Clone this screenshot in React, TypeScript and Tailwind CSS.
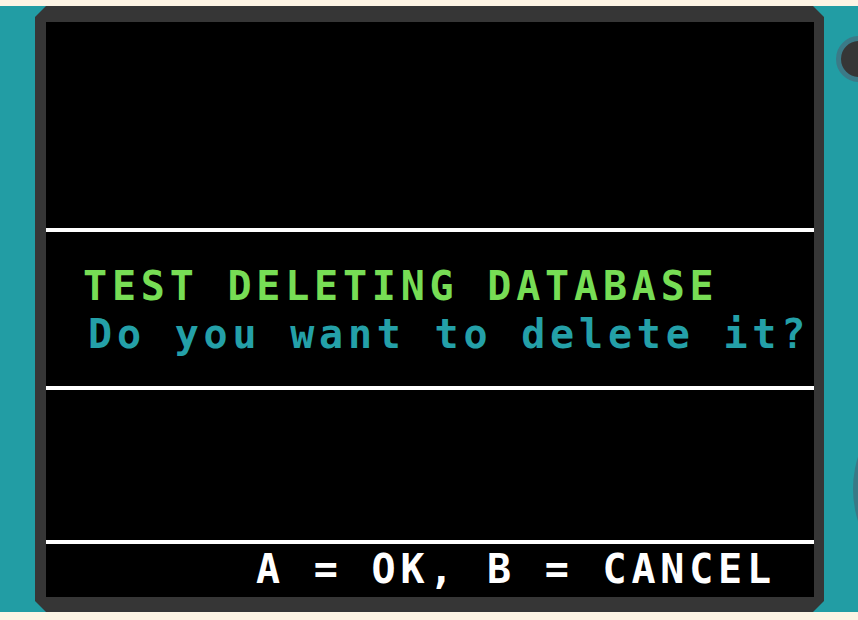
const mono = "font-['DejaVu_Sans_Mono','Liberation_Mono',monospace] font-bold text-[40px] leading-[48px] tracking-[4.8px] whitespace-pre"

export default function App() {
  return (
    <div className="w-[858px] h-[620px] bg-[#fdf4e4] pt-[6px] overflow-hidden">
      <div className="relative h-[606px] bg-[#229da4] pl-[35px] overflow-hidden">
        {/* right side buttons */}
        <div className="absolute left-[836px] top-[30px] w-[46px] h-[46px] rounded-full bg-[#363636] border-[5px] border-[#3b7a87]" />
        <div className="absolute left-[853px] top-[377px] w-[212px] h-[212px] rounded-full bg-[#377a86]" />

        <div className="relative w-[789px] h-full bg-[#363636] pl-[11px] pr-[10px] pt-[16px] pb-[15px] [clip-path:polygon(11px_0,calc(100%-11px)_0,100%_11px,100%_calc(100%-11px),calc(100%-11px)_100%,11px_100%,0_calc(100%-11px),0_11px)]">
          <div className="flex flex-col h-full bg-black">
            <div className="h-[206px]" />
            <div className="h-[4px] bg-white" />
            <div className="h-[154px] pt-[30px] pl-[37px]">
              <div className={`${mono} text-[#77dd55]`}>TEST DELETING DATABASE</div>
              <div className={`${mono} text-[#24a0a8] ml-[5px]`}>Do you want to delete it?</div>
            </div>
            <div className="h-[4px] bg-white" />
            <div className="h-[150px]" />
            <div className="h-[4px] bg-white" />
            <div className="flex-1 pt-[1px] pl-[210px]">
              <div className={`${mono} text-white`}>A = OK, B = CANCEL</div>
            </div>
          </div>
        </div>
      </div>
    </div>
  )
}
